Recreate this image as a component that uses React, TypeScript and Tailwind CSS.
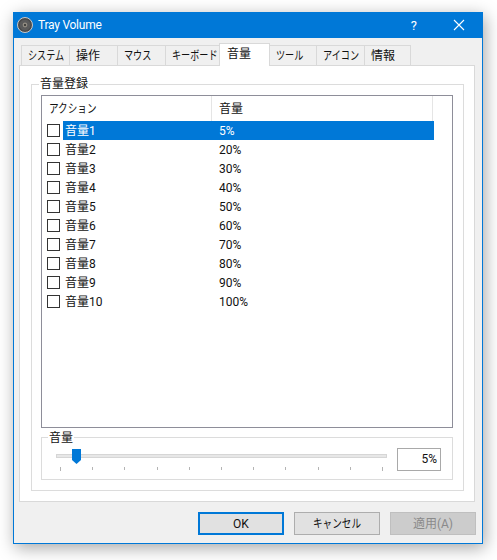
import type { ReactNode } from "react";

const font = { fontFamily: 'Roboto, "Noto Sans CJK JP", sans-serif' };

const tabs = [
  { label: "システム", w: "w-[49px]", kana: true },
  { label: "操作", w: "w-[49px]" },
  { label: "マウス", w: "w-[49px]", kana: true },
  { label: "キーボード", w: "w-[55px]", kana: true },
  { label: "音量", w: "w-[51px]", active: true },
  { label: "ツール", w: "w-[48px]", kana: true },
  { label: "アイコン", w: "w-[49px]", kana: true },
  { label: "情報", w: "w-[47px]" },
];

const rows = [
  ["音量1", "5%"],
  ["音量2", "20%"],
  ["音量3", "30%"],
  ["音量4", "40%"],
  ["音量5", "50%"],
  ["音量6", "60%"],
  ["音量7", "70%"],
  ["音量8", "80%"],
  ["音量9", "90%"],
  ["音量10", "100%"],
];

function Kana({ children, className }: { children: ReactNode; className: string }) {
  return <span className={`inline-block whitespace-nowrap ${className}`}>{children}</span>;
}

function SpeakerIcon() {
  return (
    <svg width="16" height="16" viewBox="0 0 16 16" className="shrink-0">
      <circle cx="8" cy="8" r="7.5" fill="#4a4a4a" stroke="#c8c8c8" strokeWidth="1" />
      <circle cx="8" cy="8" r="5.5" fill="#5a5a5a" />
      <circle cx="8" cy="8" r="2.4" fill="#8f8a80" />
      <circle cx="8" cy="8" r="1" fill="#2a2a2a" />
    </svg>
  );
}

export default function App() {
  return (
    <div className="w-[497px] h-[560px] bg-white pt-[12px] pl-[13px] overflow-hidden" style={font}>
      <div className="w-[470px] h-[532px] flex flex-col border border-[#0078d7] border-t-0 bg-[#f0f0f0] shadow-[2px_4px_16px_rgba(0,0,0,0.35)]">
        <div className="h-[26px] shrink-0 bg-[#0078d7] flex items-center text-white -mx-px">
          <div className="ml-[4px] mr-[5px]"><SpeakerIcon /></div>
          <span className="text-[12px] leading-[26px] tracking-[-0.25px]">Tray Volume</span>
          <span className="ml-auto mr-[36px] text-[13px] leading-none">?</span>
          <svg width="12" height="12" viewBox="0 0 12 12" className="mr-[18px]">
            <path d="M1 1 L11 11 M11 1 L1 11" stroke="white" strokeWidth="1.1" fill="none" />
          </svg>
        </div>

        <div className="pl-[5px] pr-[6px] pt-[7px] flex-1 flex flex-col min-h-0">
          <div className="flex items-end pl-[2px] h-[20px] relative z-10 text-[12px] text-[#111]">
            {tabs.map((t) => (
              <div
                key={t.label}
                className={
                  t.active
                    ? `${t.w} h-[23px] -mb-px -mr-px bg-white border border-b-0 border-[#d9d9d9] flex items-center pl-[7px] leading-none relative z-10 pb-[3px]`
                    : `${t.w} h-[20px] -mr-px bg-[#f0f0f0] border border-b-0 border-[#d9d9d9] flex items-center pl-[6px] leading-none`
                }
              >
                {t.kana ? <Kana className="scale-x-[0.76] origin-left">{t.label}</Kana> : t.label}
              </div>
            ))}
          </div>

          <div className="w-[456px] h-[437px] bg-white border border-[#d9d9d9] pt-[18px] pl-[11px]">
            <div className="w-[433px] h-[407px] border border-[#dcdcdc] pt-[10px] pl-[9px] relative">
              <span className="absolute left-[7px] -top-[9px] bg-white px-px text-[12px] leading-[16px] text-[#111]">音量登録</span>
              <div className="w-[412px] h-[333px] border border-[#8e8e99] bg-white text-[12px] text-[#111]">
                <div className="flex h-[25px] items-stretch">
                  <div className="w-[170px] pl-[7px] border-r border-[#e5e5e5] flex items-center leading-none"><Kana className="scale-x-[0.8] origin-left">アクション</Kana></div>
                  <div className="w-[221px] pl-[7px] border-r border-[#e5e5e5] flex items-center leading-none">音量</div>
                </div>
                {rows.map(([name, vol], i) => (
                  <div key={name} className="flex h-[19px] items-center">
                    <div className="w-[21px] shrink-0 pl-[5px]">
                      <div className="w-[13px] h-[13px] border border-[#333] bg-white" />
                    </div>
                    <div className={`w-[371px] h-[19px] flex items-center leading-none ${i === 0 ? "bg-[#0078d7] text-white" : ""}`}>
                      <span className="w-[156px] pl-[2px]">{name}</span>
                      <span>{vol}</span>
                    </div>
                  </div>
                ))}
              </div>

              <div className="w-[412px] h-[43px] mt-[9px] border border-[#dcdcdc] relative flex">
                <span className="absolute left-[6px] -top-[8px] bg-white px-px text-[12px] leading-[16px] text-[#111]">音量</span>
                <div className="w-[341px] ml-[14px] shrink-0 pt-[16px] relative">
                  <div className="h-[4px] w-[331px] bg-[#e7e7e7] border border-[#d6d6d6]" />
                  <svg width="9" height="15" viewBox="0 0 9 15" className="absolute left-[16px] top-[11px]">
                    <path d="M0 0 H9 V11 L4.5 15 L0 11 Z" fill="#0078d7" />
                  </svg>
                  <div className="flex justify-between w-[323px] ml-[4px] mt-[9px] items-start">
                    {Array.from({ length: 11 }).map((_, i) => (
                      <div key={i} className={`w-px bg-[#b4b4b4] ${i === 0 || i === 10 ? "h-[4px]" : "h-[3px]"}`} />
                    ))}
                  </div>
                </div>
                <div className="w-[44px] h-[23px] mt-[10px] border border-[#a9a9a9] bg-white text-[12px] leading-[21px] text-right pr-[3px] text-[#111]">5%</div>
              </div>
            </div>
          </div>

          <div className="flex justify-end gap-[10px] mt-[10px] text-[12px]">
            <button className="w-[86px] h-[23px] bg-[#e1e1e1] border-2 border-[#0078d7] text-[#111]" style={font}>OK</button>
            <button className="w-[86px] h-[23px] bg-[#e1e1e1] border border-[#adadad] text-[#111]" style={font}><Kana className="scale-x-[0.8] origin-center">キャンセル</Kana></button>
            <button className="w-[86px] h-[23px] bg-[#cccccc] border border-[#bfbfbf] text-[#8a8a8a]" style={font}>適用(A)</button>
          </div>
        </div>
      </div>
    </div>
  );
}
